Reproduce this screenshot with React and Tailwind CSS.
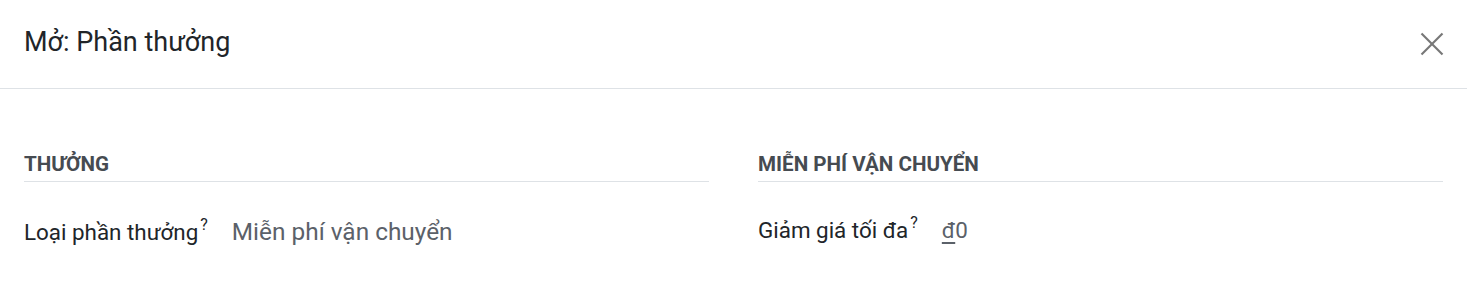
function CloseIcon() {
  return (
    <svg width="24" height="24" viewBox="0 0 24 24" fill="none" stroke="currentColor" strokeWidth="2.2">
      <line x1="1.5" y1="1.5" x2="22.5" y2="22.5" />
      <line x1="22.5" y1="1.5" x2="1.5" y2="22.5" />
    </svg>
  );
}

function Field({ label, valueClass, children }) {
  return (
    <div className="flex items-baseline">
      <label className="text-[22.4px] text-[#212529] whitespace-nowrap">
        {label}
        <sup className="text-[16px] ml-[2px] text-[#212529] relative top-[-10px]">?</sup>
      </label>
      <div className={`ml-[24px] text-[#5b6169] ${valueClass}`}>{children}</div>
    </div>
  );
}

export default function App() {
  return (
    <div className="w-full bg-white" style={{ fontFamily: 'Roboto, "Noto Sans", sans-serif' }}>
      <header className="h-[89px] flex items-center justify-between pl-[24px] pr-[23px] border-b border-[#dee2e6]">
        <h4 className="text-[27px] text-[#212529] leading-none mt-[-4px]">Mở: Phần thưởng</h4>
        <button className="text-[#777777]">
          <CloseIcon />
        </button>
      </header>

      <div className="grid grid-cols-2 gap-[49px] px-[24px] pt-[64px]">
        <section>
          <h5 className="text-[20.6px] font-bold uppercase text-[#464b51] leading-[22px] pb-[6px] border-b border-[#dee2e6]">
            Thưởng
          </h5>
          <div className="pt-[32px]">
            <Field label="Loại phần thưởng" valueClass="text-[24.4px]">Miễn phí vận chuyển</Field>
          </div>
        </section>
        <section>
          <h5 className="text-[20.6px] font-bold uppercase text-[#464b51] leading-[22px] pb-[6px] border-b border-[#dee2e6]">
            Miễn phí vận chuyển
          </h5>
          <div className="pt-[32px]">
            <Field label="Giảm giá tối đa" valueClass="text-[22.4px]">
              <span className="underline underline-offset-[4px]">đ</span>0
            </Field>
          </div>
        </section>
      </div>
    </div>
  );
}
